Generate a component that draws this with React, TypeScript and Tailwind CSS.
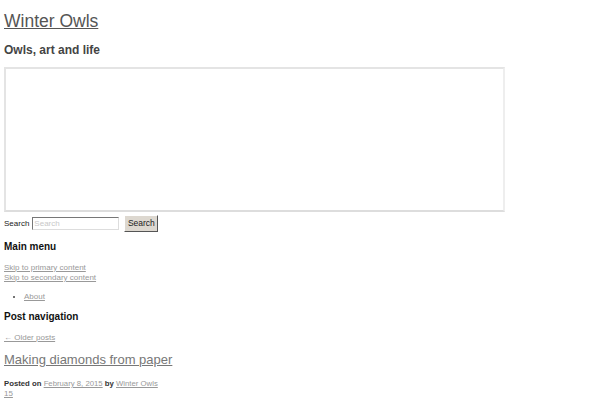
export default function App() {
  return (
    <div className="min-h-[400px] w-[600px] overflow-hidden bg-white px-[4px] text-[#333]" style={{ fontFamily: '"Liberation Sans", Arial, sans-serif' }}>
      <h1 className="pt-[11px] text-[17.5px] leading-[20px]">
        <a href="#" className="text-[#555] underline">Winter Owls</a>
      </h1>
      <h2 className="mt-[11px] text-[12px] font-bold leading-[16px] text-[#444]">Owls, art and life</h2>
      <div className="mt-[9px] h-[145px] w-[501px] border-2 border-[#e4e4e4] border-r-[#eee] border-b-[#ddd]" />
      <form className="mt-[3px] flex h-[17px] items-center gap-[2px] text-[8px] text-[#222]">
        <label className="mr-[1px]">Search</label>
        <input
          placeholder="Search"
          className="h-[13px] w-[87px] border border-t-[#777] border-l-[#777] border-r-[#ddd] border-b-[#ddd] bg-white px-[1px] text-[8px] placeholder:text-[#c8c8c8]"
        />
        <button className="ml-[3px] h-[17px] w-[34px] border border-t-[#fff] border-l-[#fff] border-r-[#555] border-b-[#555] bg-[#ddd8d0] text-[8.5px] text-[#222]">
          Search
        </button>
      </form>
      <h3 className="mt-[9px] text-[10px] font-bold leading-[12px] text-[#111]">Main menu</h3>
      <div className="mt-[10px] flex flex-col text-[8px] leading-[10px]">
        <a href="#" className="text-[#999] underline">Skip to primary content</a>
        <a href="#" className="text-[#999] underline">Skip to secondary content</a>
      </div>
      <ul className="mt-[9px] list-disc pl-[20px] text-[8px] leading-[10px] text-[#444]">
        <li><a href="#" className="text-[#999] underline">About</a></li>
      </ul>
      <h3 className="mt-[9px] text-[10px] font-bold leading-[12px] text-[#111]">Post navigation</h3>
      <div className="mt-[10px] text-[8px] leading-[10px]">
        <a href="#" className="text-[#999] underline">← Older posts</a>
      </div>
      <h2 className="mt-[9px] text-[13px] leading-[16px]">
        <a href="#" className="text-[#777] underline">Making diamonds from paper</a>
      </h2>
      <div className="mt-[11px] text-[7.75px] leading-[10px] text-[#333]">
        <span className="font-bold">Posted on </span>
        <a href="#" className="text-[#999] underline">February 8, 2015</a>
        <span className="font-bold"> by </span>
        <a href="#" className="text-[#999] underline">Winter Owls</a>
      </div>
      <div className="text-[8px] leading-[10px]">
        <a href="#" className="text-[#999] underline">15</a>
      </div>
    </div>
  );
}
